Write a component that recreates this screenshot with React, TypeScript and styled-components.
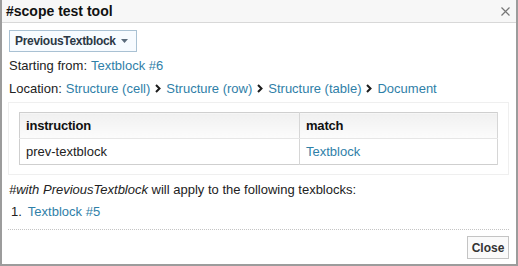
import React from "react";
import styled, { createGlobalStyle } from "styled-components";

const Global = createGlobalStyle`
  html, body { margin: 0; padding: 0; background: #fff; }
  body { font-family: "Liberation Sans", Arial, sans-serif; font-size: 13px; color: #222; }
`;

const Dialog = styled.div`
  box-sizing: border-box;
  width: 518px;
  height: 266px;
  border: 2px solid #9c9c9c;
  border-top: none;
  display: flex;
  flex-direction: column;
  background: #fff;
`;

const TitleBar = styled.div`
  height: 23px;
  box-sizing: border-box;
  background: #f7f7f7;
  border-bottom: 1px solid #d8d8d8;
  display: flex;
  align-items: center;
  justify-content: space-between;
  padding: 0 6px 0 4px;
`;

const Title = styled.span`
  font-weight: bold;
  font-size: 14px;
  color: #111;
`;

const CloseX = styled.svg`
  width: 9px;
  height: 9px;
  display: block;
`;

const Body = styled.div`
  flex: 1;
  display: flex;
  flex-direction: column;
  padding: 7px 7px 5px 6px;
`;

const Dropdown = styled.button`
  align-self: flex-start;
  box-sizing: border-box;
  width: 128px;
  height: 22px;
  margin-left: 1px;
  border: 1px solid #a9c1d3;
  background: #f7fbff;
  display: flex;
  align-items: center;
  justify-content: space-between;
  padding: 0 8px 0 5px;
  font-family: inherit;
  font-size: 12px;
  letter-spacing: -0.3px;
  font-weight: bold;
  color: #2b3845;
`;

const Caret = styled.svg`
  width: 7px;
  height: 4px;
  flex: none;
  display: block;
`;

const Line = styled.div`
  height: 23px;
  display: flex;
  align-items: center;
  gap: 4px;
  padding-left: 1px;
  white-space: nowrap;
  &:first-of-type { margin-top: 2px; }
`;

const Link = styled.a`
  color: #2f80a8;
  text-decoration: none;
`;

const Crumbs = styled.span`
  display: inline-flex;
  align-items: center;
  gap: 5px;
`;

const Chevron = styled.svg`
  width: 6px;
  height: 9px;
  display: block;
`;

const TableBox = styled.div`
  margin-top: 2px;
  border: 1px solid #efefef;
  padding: 9px 10px 9px 10px;
`;

const Table = styled.table`
  width: 100%;
  border-collapse: collapse;
  border: 1px solid #cfcfcf;
`;

const Th = styled.th<{ $w?: string }>`
  text-align: left;
  font-weight: bold;
  letter-spacing: -0.2px;
  height: 25px;
  padding: 0 6px;
  background: linear-gradient(#f0f0f0, #fcfcfc);
  border-right: 1px solid #d6d6d6;
  border-bottom: 1px solid #e6e6e6;
  color: #111;
  width: ${(p) => p.$w || "auto"};
`;

const Td = styled.td`
  height: 25px;
  padding: 0 6px;
  border-right: 1px solid #d6d6d6;
`;

const Para = styled.div`
  margin-top: 3px;
  height: 22px;
  display: flex;
  align-items: center;
  padding-left: 1px;
`;

const List = styled.ol`
  margin: 0;
  padding: 0 0 0 3px;
  list-style: none;
`;

const Item = styled.li`
  height: 22px;
  display: flex;
  align-items: center;
  gap: 6px;
`;

const Footer = styled.div`
  margin-top: 7px;
  border-top: 1px dotted #c4c4c4;
  padding-top: 6px;
  display: flex;
  justify-content: flex-end;
`;

const CloseButton = styled.button`
  box-sizing: border-box;
  height: 23px;
  width: 42px;
  padding: 0;
  border: 1px solid #c4c4c4;
  background: #fafafa;
  font-family: inherit;
  font-size: 12px;
  font-weight: bold;
  color: #333;
`;

const ChevronIcon = () => (
  <Chevron viewBox="0 0 6 9">
    <path d="M1 1 L4.5 4.5 L1 8" fill="none" stroke="#1c1c1c" strokeWidth="2" />
  </Chevron>
);

const crumbs = ["Structure (cell)", "Structure (row)", "Structure (table)", "Document"];

export default function App() {
  return (
    <>
      <Global />
      <Dialog>
        <TitleBar>
          <Title>#scope test tool</Title>
          <CloseX viewBox="0 0 9 9">
            <path d="M0.5 0.5 L8.5 8.5 M8.5 0.5 L0.5 8.5" stroke="#777" strokeWidth="1.2" />
          </CloseX>
        </TitleBar>
        <Body>
          <Dropdown>
            PreviousTextblock
            <Caret viewBox="0 0 7 4">
              <path d="M0 0 L7 0 L3.5 4 Z" fill="#5b6b7b" />
            </Caret>
          </Dropdown>
          <Line>
            Starting from: <Link>Textblock #6</Link>
          </Line>
          <Line>
            Location:
            <Crumbs>
              {crumbs.map((c, i) => (
                <React.Fragment key={c}>
                  {i > 0 && <ChevronIcon />}
                  <Link>{c}</Link>
                </React.Fragment>
              ))}
            </Crumbs>
          </Line>
          <TableBox>
            <Table>
              <thead>
                <tr>
                  <Th $w="267px">instruction</Th>
                  <Th>match</Th>
                </tr>
              </thead>
              <tbody>
                <tr>
                  <Td>prev-textblock</Td>
                  <Td>
                    <Link>Textblock</Link>
                  </Td>
                </tr>
              </tbody>
            </Table>
          </TableBox>
          <Para>
            <span>
              <i>#with PreviousTextblock</i> will apply to the following texblocks:
            </span>
          </Para>
          <List>
            <Item>
              1. <Link>Textblock #5</Link>
            </Item>
          </List>
          <Footer>
            <CloseButton>Close</CloseButton>
          </Footer>
        </Body>
      </Dialog>
    </>
  );
}
